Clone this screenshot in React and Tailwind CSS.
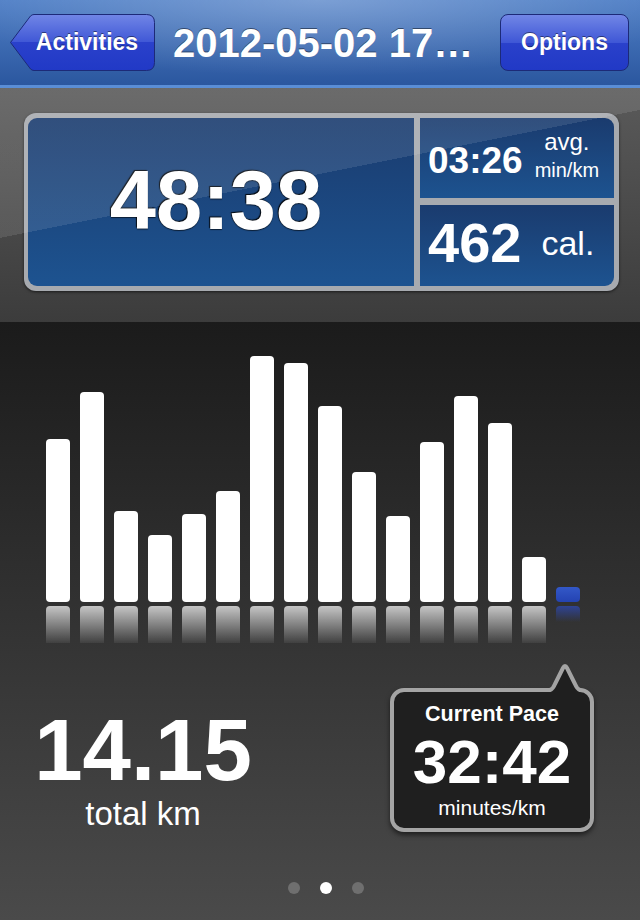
const bars = [163, 210, 91, 67, 88, 111, 246, 239, 196, 130, 86, 160, 206, 179, 45];

function BackButton() {
  return (
    <button className="relative flex h-[57px] w-[146px] items-center justify-center pl-[10px]">
      <svg className="absolute inset-0" width="146" height="57" viewBox="0 0 146 57">
        <defs>
          <linearGradient id="btn" x1="0" y1="0" x2="0" y2="1">
            <stop offset="0" stopColor="#7186e6" />
            <stop offset="0.5" stopColor="#3f57d6" />
            <stop offset="0.5" stopColor="#2a41cb" />
            <stop offset="1" stopColor="#2139c6" />
          </linearGradient>
        </defs>
        <path
          d="M1.5,28.5 L21.5,2 Q23,0.5 25,0.5 L137.5,0.5 Q145.5,0.5 145.5,8.5 L145.5,48.5 Q145.5,56.5 137.5,56.5 L25,56.5 Q23,56.5 21.5,55 Z"
          fill="url(#btn)"
          stroke="#1c2a78"
          strokeWidth="1"
        />
      </svg>
      <span className="relative text-[23px] font-bold leading-none [text-shadow:0_-1px_0_rgba(0,0,0,0.45)]">
        Activities
      </span>
    </button>
  );
}

function NavBar() {
  return (
    <div className="relative flex h-[88px] items-center border-b-[3px] border-[#5a8ed6] bg-[linear-gradient(180deg,#4f7fc6,#2b579f)] pl-[9px] pr-[11px]">
      <div className="pointer-events-none absolute inset-0 bg-[radial-gradient(ellipse_60%_90%_at_50%_0%,rgba(255,255,255,0.25),transparent)]" />
      <BackButton />
      <h1 className="relative ml-[18px] text-[40px] font-bold leading-none [text-shadow:0_-1px_0_rgba(0,0,0,0.45)]">
        2012-05-02 17…
      </h1>
      <button className="relative ml-auto flex h-[57px] w-[129px] items-center justify-center rounded-[8px] border border-[#1c2a78] bg-[linear-gradient(180deg,#7186e6_0%,#3f57d6_50%,#2a41cb_50%,#2139c6_100%)]">
        <span className="text-[23px] font-bold leading-none [text-shadow:0_-1px_0_rgba(0,0,0,0.45)]">
          Options
        </span>
      </button>
    </div>
  );
}

function Summary() {
  const cell = "bg-[linear-gradient(180deg,#1a3b6e,#1d5390)]";
  return (
    <div className="relative h-[234px] bg-[linear-gradient(180deg,#5a5a5a,#3c3c3c)] pt-[25px] pl-[24px]">
      <div className="flex h-[178px] w-[595px] gap-[6px] rounded-[12px] bg-[#a7aaaf] p-[5px] pl-[4px] shadow-[0_1px_3px_rgba(0,0,0,0.6)]">
        <div className={`flex w-[386px] items-center justify-center rounded-l-[9px] pb-[4px] pr-[10px] ${cell}`}>
          <span className="text-[83px] font-bold leading-none [text-shadow:-1px_-1px_1px_rgba(0,0,0,0.9),0_1px_1px_rgba(0,0,0,0.6)]">
            48:38
          </span>
        </div>
        <div className="flex flex-1 flex-col gap-[7px]">
          <div className={`flex h-[80px] items-start rounded-tr-[9px] pl-[8px] ${cell}`}>
            <span className="mt-[24px] text-[37px] font-bold leading-none">03:26</span>
            <div className="ml-[12px] mt-[12px] flex flex-col items-center">
              <span className="text-[24px] leading-none">avg.</span>
              <span className="mt-[6px] text-[20px] leading-none">min/km</span>
            </div>
          </div>
          <div className={`flex flex-1 items-start rounded-br-[9px] pl-[8px] ${cell}`}>
            <span className="mt-[10px] text-[56px] font-bold leading-none">462</span>
            <span className="ml-[20px] mt-[21px] text-[34px] leading-none">cal.</span>
          </div>
        </div>
      </div>
      <div className="pointer-events-none absolute inset-0 bg-[linear-gradient(168.7deg,rgba(255,255,255,0.1)_41.4%,transparent_41.4%)]" />
    </div>
  );
}

function Chart() {
  return (
    <div>
      <div className="mt-[34px] flex h-[246px] items-end gap-[10px] pl-[46px]">
        {bars.map((h, i) => (
          <div key={i} className="w-[24px] rounded-[4px] bg-white" style={{ height: h }} />
        ))}
        <div className="h-[15px] w-[24px] rounded-[4px] bg-[linear-gradient(180deg,#3358c8,#2443b2)]" />
      </div>
      <div className="mt-[4px] flex h-[37px] items-start gap-[10px] pl-[46px]">
        {bars.map((_, i) => (
          <div
            key={i}
            className="h-[37px] w-[24px] rounded-t-[4px] bg-[linear-gradient(180deg,rgba(255,255,255,0.72),rgba(255,255,255,0.06))]"
          />
        ))}
        <div className="h-[16px] w-[24px] rounded-t-[4px] bg-[linear-gradient(180deg,rgba(45,75,190,0.7),rgba(45,75,190,0))]" />
      </div>
    </div>
  );
}

function PaceBubble() {
  return (
    <div className="relative ml-[104px] flex h-[144px] w-[204px] flex-col items-center rounded-[14px] border-4 border-[#a4a4a4] bg-[#1f1f1f] pt-[12px] shadow-[0_3px_5px_rgba(0,0,0,0.55)]">
      <svg className="absolute left-[154px] top-[-30px]" width="34" height="32" viewBox="0 0 34 32">
        <path d="M2,32 L2,28 Q5,27 7,22 L15,6 Q17,2 19,6 L27,22 Q29,27 32,28 L32,32 Z" fill="#1f1f1f" />
        <path
          d="M2,28 Q5,27 7,22 L15,6 Q17,2 19,6 L27,22 Q29,27 32,28"
          fill="none"
          stroke="#a4a4a4"
          strokeWidth="4"
          strokeLinecap="round"
          strokeLinejoin="round"
        />
      </svg>
      <span className="text-[21.5px] font-bold leading-none">Current Pace</span>
      <span className="mt-[5px] text-[62px] font-bold leading-none">32:42</span>
      <span className="mt-[4px] text-[21px] leading-none">minutes/km</span>
    </div>
  );
}

export default function App() {
  return (
    <div className="flex h-[920px] w-[640px] flex-col overflow-hidden bg-[#1b1b1b] font-['Liberation_Sans',Arial,sans-serif] text-white">
      <NavBar />
      <Summary />
      <div className="flex flex-1 flex-col bg-[linear-gradient(180deg,#1b1b1b,#4a4a4a)]">
        <Chart />
        <div className="mt-[45px] flex items-start">
          <div className="flex w-[286px] flex-col items-center pt-[18px]">
            <span className="text-[87px] font-bold leading-none">14.15</span>
            <span className="mt-[4px] text-[33px] leading-none">total km</span>
          </div>
          <PaceBubble />
        </div>
        <div className="mt-[50px] flex justify-center gap-[20px] pl-[12px]">
          <span className="h-[12px] w-[12px] rounded-full bg-[#6f6f6f]" />
          <span className="h-[12px] w-[12px] rounded-full bg-white" />
          <span className="h-[12px] w-[12px] rounded-full bg-[#6f6f6f]" />
        </div>
      </div>
    </div>
  );
}
